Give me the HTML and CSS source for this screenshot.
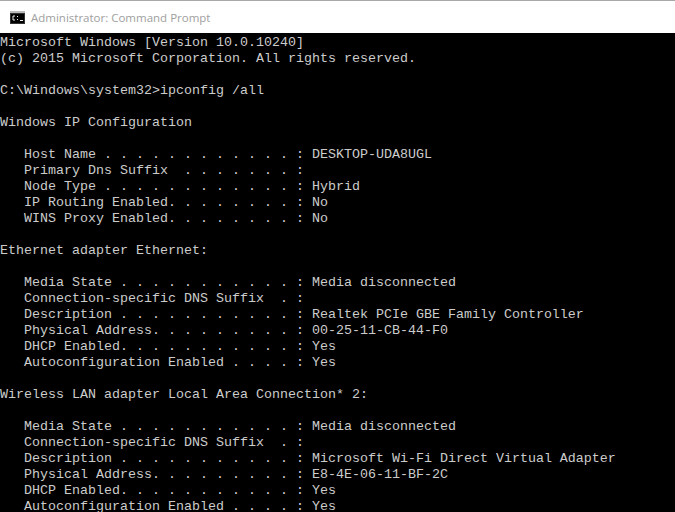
FILE: index.html
```html
<!DOCTYPE html>
<html>
<head>
<meta charset="utf-8">
<title>Administrator: Command Prompt</title>
<link rel="stylesheet" href="styles.css">
</head>
<body>
<div class="window">
<header class="titlebar">
<svg class="appicon" width="15" height="13" viewBox="0 0 15 13"><rect width="15" height="13" fill="#333"/><rect width="15" height="2" fill="#bbb"/><rect x="1" y="3" width="13" height="9" fill="#000"/><path d="M5 5H3v4h2M7 5.5h1M7 8.5h1M10 9.5h3" stroke="#eee" fill="none"/></svg>
<span class="title">Administrator: Command Prompt</span>
</header>
<pre class="console">Microsoft Windows [Version 10.0.10240]
(c) 2015 Microsoft Corporation. All rights reserved.

C:\Windows\system32&gt;ipconfig /all

Windows IP Configuration

   Host Name . . . . . . . . . . . . : DESKTOP-UDA8UGL
   Primary Dns Suffix  . . . . . . . :
   Node Type . . . . . . . . . . . . : Hybrid
   IP Routing Enabled. . . . . . . . : No
   WINS Proxy Enabled. . . . . . . . : No

Ethernet adapter Ethernet:

   Media State . . . . . . . . . . . : Media disconnected
   Connection-specific DNS Suffix  . :
   Description . . . . . . . . . . . : Realtek PCIe GBE Family Controller
   Physical Address. . . . . . . . . : 00-25-11-CB-44-F0
   DHCP Enabled. . . . . . . . . . . : Yes
   Autoconfiguration Enabled . . . . : Yes

Wireless LAN adapter Local Area Connection* 2:

   Media State . . . . . . . . . . . : Media disconnected
   Connection-specific DNS Suffix  . :
   Description . . . . . . . . . . . : Microsoft Wi-Fi Direct Virtual Adapter
   Physical Address. . . . . . . . . : E8-4E-06-11-BF-2C
   DHCP Enabled. . . . . . . . . . . : Yes
   Autoconfiguration Enabled . . . . : Yes</pre>
</div>
</body>
</html>
```
FILE: styles.css
```css
html, body {
  margin: 0;
  height: 100%;
  overflow: hidden;
  background: #000;
}
.window {
  display: flex;
  flex-direction: column;
  height: 512px;
  overflow: hidden;
}
.titlebar {
  display: flex;
  align-items: center;
  gap: 6px;
  height: 33px;
  flex: none;
  padding-left: 10px;
  box-sizing: border-box;
  background: #fff;
  border-top: 1px solid #a8a8a8;
}
.title {
  font: 11.5px "Open Sans", sans-serif;
  color: #a0a0a0;
}
.console {
  margin: 0;
  padding-top: 2px;
  font: 13.33px/16px "Liberation Mono", monospace;
  color: #ccc;
  background: #000;
}
```
